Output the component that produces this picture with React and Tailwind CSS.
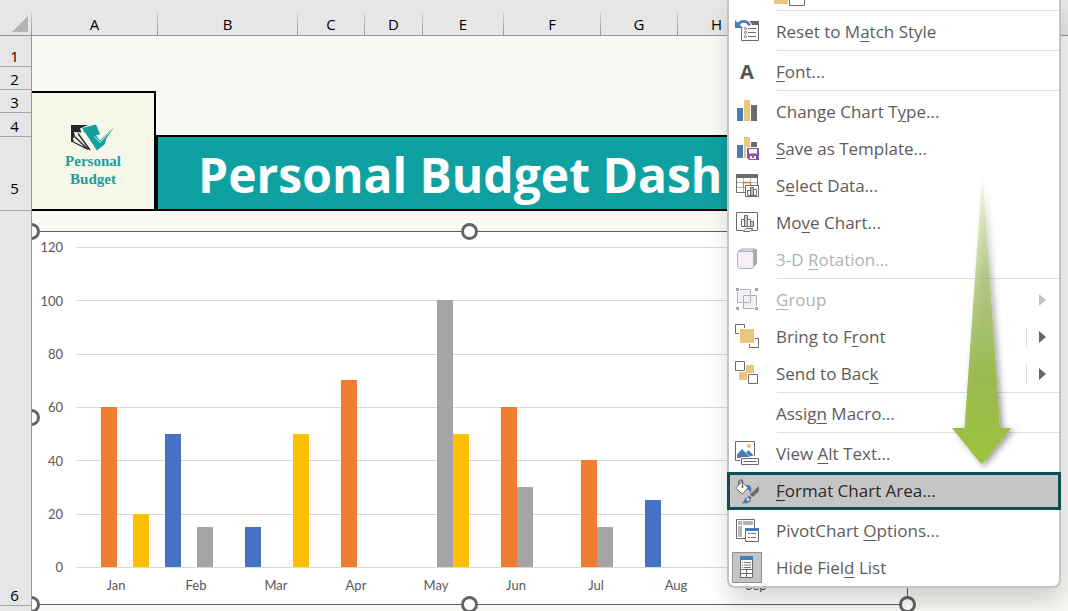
import React from "react";

const COLUMNS = [
  { name: "A", width: "w-[126px]" },
  { name: "B", width: "w-[140px]" },
  { name: "C", width: "w-[67px]" },
  { name: "D", width: "w-[58px]" },
  { name: "E", width: "w-[81px]" },
  { name: "F", width: "w-[97px]" },
  { name: "G", width: "w-[77px]" },
  { name: "H", width: "w-[78px]" },
];

const ROWS = [
  { name: "1", size: "h-[31px]" },
  { name: "2", size: "h-[23px]" },
  { name: "3", size: "h-[23px]" },
  { name: "4", size: "h-6" },
  { name: "5", size: "h-[74px] pb-3" },
  { name: "6", size: "h-[395px]" },
];

const SERIES = ["bg-[#4472c4]", "bg-[#ed7d31]", "bg-[#a5a5a5]", "bg-[#ffc000]"];

const MONTHS = [
  { name: "Jan", values: [0, 60, 0, 20] },
  { name: "Feb", values: [50, 0, 15, 0] },
  { name: "Mar", values: [15, 0, 0, 50] },
  { name: "Apr", values: [0, 70, 0, 0] },
  { name: "May", values: [0, 0, 100, 50] },
  { name: "Jun", values: [0, 60, 30, 0] },
  { name: "Jul", values: [0, 40, 15, 0] },
  { name: "Aug", values: [25, 0, 0, 0] },
  { name: "Sep", values: [0, 0, 0, 0] },
];

const TICKS = [120, 100, 80, 60, 40, 20, 0];

const G = "#6b6b6b";
const BLUE = "#4a7db3";
const SAND = "#ecc57c";

function Icon({ children }) {
  return (
    <svg width="26" height="25" viewBox="0 0 26 25" fill="none" aria-hidden="true" className="shrink-0">
      {children}
    </svg>
  );
}

const ICONS = {
  reset: (
    <Icon>
      <path d="M7.5 9v12.5h17V2.5H16" stroke={G} />
      <path d="M16 2h9v4h-7z" fill={G} />
      <g stroke={G} fill="#fff">
        <circle cx="11.5" cy="9.5" r="1.1" />
        <circle cx="11.5" cy="13.5" r="1.1" />
        <circle cx="11.5" cy="17.5" r="1.1" />
      </g>
      <path d="M14 9.5h8M14 13.5h8M14 17.5h8" stroke={G} />
      <path d="M4 6C6 1.500 13 .500 15.500 6.500" stroke={BLUE} strokeWidth="2.800" />
      <path d="M1 1v8h8z" fill={BLUE} />
    </Icon>
  ),
  bars: (
    <Icon>
      <path d="M3 9h6v13H3z" fill={BLUE} />
      <path d="M10 1h6v21h-6z" fill={SAND} />
      <path d="M17 6h6v16h-6z" fill={G} />
    </Icon>
  ),
  save: (
    <Icon>
      <path d="M3 9h6v13H3z" fill={BLUE} />
      <path d="M10 1h6v10h-4v11h-2z" fill={SAND} />
      <path d="M17 6h6v5h-6z" fill={G} />
      <path d="M13 12h12v12H15l-2-2z" fill="#8a56a8" />
      <path d="M15 13h8v4.500h-8zM16 20h6v3h-6z" fill="#fff" />
      <path d="M18 20h2v2h-2z" fill="#8a56a8" />
    </Icon>
  ),
  select: (
    <Icon>
      <path d="M11 19.500H2.500v-18h21V12" stroke={G} />
      <path d="M2 1h22v4H2z" fill={G} />
      <path d="M3 9.500h20M3 14.500h8M9.500 5v14M16.500 5v7" stroke="#b5b5b5" />
      <path d="M9.500 14.500v-5h7v3" stroke="#e07b27" strokeWidth="1.300" />
      <path d="M11.500 12.500h13v11h-13z" fill="#fff" stroke={G} />
      <path d="M13.500 22.500v-5h3v5zM19.500 22.500v-6h3v6z" fill="#fff" stroke={G} />
      <path d="M16.500 22.500v-8h3v8z" fill="#b5b5b5" stroke={G} />
    </Icon>
  ),
  move: (
    <Icon>
      <path d="M9 20.500H2.500v-18h21v18H17" stroke={G} />
      <path d="M7.500 16.500v-7h3v7zM13.500 16.500v-7h3v7z" fill="#fff" stroke={G} />
      <path d="M10.500 16.500v-11h3v11zM16.500 16.500v-5h3v5z" fill="#c9c9c9" stroke={G} />
      <path d="M12 18.500h7l-3 3H9.500c0-1.500 1.500-1 2.500-3z" fill="#fff" stroke={G} />
    </Icon>
  ),
  cube: (
    <Icon>
      <path d="M4 4l4-2.500h12q3 0 3 3v11q0 2-1.500 3L18 21z" fill="#a9a7aa" />
      <path d="M6 4l3-1.800h11L18 4z" fill="#dad7db" />
      <rect x="3.500" y="4.500" width="16" height="17" rx="2.500" fill="#f5f0f7" stroke="#b3b1b4" />
    </Icon>
  ),
  group: (
    <Icon>
      <path d="M3.500 2.500h13v13h-13zM9.500 8.500h13v13h-13z" fill="#f5f0f7" />
      <path d="M3.500 2.500h13v13h-13zM9.500 8.500h13v13h-13z" stroke="#b0b0b0" />
      <path d="M1 0h5v5H1zM20 0h5v5h-5zM1 19h5v5H1zM20 19h5v5h-5z" fill="#fff" />
      <path d="M2 1h3v3H2zM21 1h3v3h-3zM2 20h3v3H2zM21 20h3v3h-3z" fill="#a6a6a6" />
    </Icon>
  ),
  front: (
    <Icon>
      <path d="M1.500 .500h9v9h-9zM15.500 14.500h9v9h-9z" stroke={G} />
      <path d="M5 4h16v16H5z" fill="#fff" />
      <path d="M6 5h14v14H6z" fill={SAND} />
    </Icon>
  ),
  back: (
    <Icon>
      <path d="M12 4h8v8h-8zM5 11h8v8H5z" fill={SAND} />
      <path d="M1.500 .500h9v9h-9zM14.500 13.500h9v9h-9z" fill="#fff" stroke={G} />
    </Icon>
  ),
  alt: (
    <Icon>
      <path d="M6 19.500H1.500V.500h19V15" stroke={G} />
      <path d="M3 17v-3.500L8 8l8 8H7v1z" fill={BLUE} />
      <path d="M12 11.500l2-2 1.500.500L19 14v1h-3.500z" fill={BLUE} />
      <circle cx="15" cy="5" r="2" fill={SAND} />
      <path d="M7.500 17.500h17v6h-17z" fill="#fff" stroke={G} />
      <path d="M9.500 20.500h13" stroke={G} />
    </Icon>
  ),
  format: (
    <Icon>
      <path d="M11.500 6.500C16 4.500 19 8 16.500 14.500 15.500 11 14 9.500 11 10z" fill={BLUE} />
      <path d="M1.500 9L8 2.800l6 6-5.800 6.200z" fill="#fff" stroke={G} />
      <path d="M4.800 6V2.500Q6.500-.500 8.500 1.800V8" stroke={G} strokeWidth="1.300" />
      <circle cx="8.500" cy="8" r="1" fill={G} />
      <path d="M25 7v5l-6 6-3-2.500z" fill={G} />
      <path d="M15 16.500l2.800 2.300-1.500 1.500-2.800-2.300z" fill={G} />
      <path d="M7.500 24c3-.500 2-4.500 5.500-5.500 2-.500 4 1 3.500 3-.500 2.500-5 3.500-9 2.500z" fill={BLUE} />
      <circle cx="14" cy="20.500" r="1.200" fill="#fff" />
    </Icon>
  ),
  pivot: (
    <Icon>
      <path d="M11 20.500H2.500v-19h18V10" stroke={G} />
      <path d="M4 3h4v4H4zM9 3h10v4H9zM4 8h4v11H4z" fill="#b5b5b5" />
      <path d="M11.500 10.500h13v13h-13z" fill="#fff" stroke={G} />
      <path d="M11 10h14v3H11z" fill={BLUE} />
      <path d="M14 15.500h2M17 15.500h5M14 19.500h2M17 19.500h5" stroke={G} strokeWidth="1.200" />
    </Icon>
  ),
  list: (
    <Icon>
      <path d="M6.500 1.500h12v21h-12z" fill="#fff" stroke={G} />
      <path d="M6 1h13v4H6z" fill={BLUE} />
      <path d="M8 7.500h1M10 7.500h7M8 10h1M10 10h7M8 12.500h1M10 12.500h7" stroke={G} strokeWidth=".900" />
      <path d="M6 14.500h13M6 18.500h13M12.500 14.500v8" stroke={G} />
    </Icon>
  ),
};

const MENU = [
  { icon: "reset", text: ["Reset to M", "a", "tch Style"] },
  { sep: true },
  { letter: "A", text: ["", "F", "ont..."] },
  { sep: true },
  { icon: "bars", text: ["Change Chart T", "y", "pe..."] },
  { icon: "save", text: ["", "S", "ave as Template..."] },
  { icon: "select", text: ["S", "e", "lect Data..."] },
  { icon: "move", text: ["Mo", "v", "e Chart..."] },
  { icon: "cube", text: ["3-D ", "R", "otation..."], disabled: true },
  { sep: true },
  { icon: "group", text: ["", "G", "roup"], disabled: true, sub: true },
  { icon: "front", text: ["Bring to F", "r", "ont"], sub: true },
  { icon: "back", text: ["Send to Bac", "k", ""], sub: true },
  { sep: true },
  { text: ["Assig", "n", " Macro..."] },
  { sep: true },
  { icon: "alt", text: ["View ", "A", "lt Text..."] },
  { icon: "format", text: ["", "F", "ormat Chart Area..."], active: true },
  { sep: true, hidden: true },
  { icon: "pivot", text: ["PivotChart ", "O", "ptions..."] },
  { icon: "list", text: ["Hide Fiel", "d", " List"], checked: true },
];

function MenuItem({ item }) {
  const tone = item.disabled ? "text-[#b1b1b1]" : item.active ? "text-[#2b2b2b]" : "text-[#5c5c5c]";
  const box = item.active
    ? "-mx-0.5 -mb-px h-[38px] w-[calc(100%+4px)] border-[3px] border-[#0f4f54] bg-[#c5c5c5] pl-0.5 pr-3"
    : "h-[37px] w-full pl-[3px] pr-[13px]";
  return (
    <button type="button" disabled={item.disabled} className={`flex items-center gap-3.5 text-left ${box} ${tone}`}>
      <span
        className={`flex h-[31px] w-[30px] shrink-0 items-center justify-center ${
          item.checked ? "border border-[#919191] bg-[#c5c5c5]" : ""
        }`}
      >
        {item.letter ? <b className="text-xl text-[#555]">{item.letter}</b> : null}
        {item.icon ? ICONS[item.icon] : null}
      </span>
      <span className="grow whitespace-pre">
        {item.text[0]}
        <span className="underline decoration-1 underline-offset-3">{item.text[1]}</span>
        {item.text[2]}
      </span>
      {item.sub ? (
        <span className={`flex h-5 items-center pl-3 ${item.disabled ? "" : "border-l border-[#dcdcdc]"}`}>
          <svg width="7" height="12" viewBox="0 0 7 12" aria-hidden="true">
            <path d="M0 0l7 6-7 6z" fill={item.disabled ? "#c3c3c3" : "#666"} />
          </svg>
        </span>
      ) : null}
    </button>
  );
}

function ContextMenu() {
  return (
    <div className="absolute right-[7px] top-0 w-[334px] rounded-b-lg border-2 border-t-0 border-[#c4c4c4] bg-white font-['Open_Sans',sans-serif] text-[17px] leading-6 shadow-[2px_14px_24px_rgba(0,0,0,0.16)]">
      <div className="h-2.5 pl-[45px]">
        <svg width="32" height="6" viewBox="0 0 32 6" aria-hidden="true">
          <path d="M0 0h14v4H0z" fill={SAND} />
          <path d="M15.500-1v6.500h15V-1" fill="#fff" stroke={G} />
        </svg>
      </div>
      <div className="mb-0.5 ml-12 h-px bg-[#dedede]" />
      {MENU.map((item, i) =>
        item.sep ? (
          <div key={i} className={`mb-0.5 ml-12 h-px ${item.hidden ? "" : "bg-[#dedede]"}`} />
        ) : (
          <MenuItem key={i} item={item} />
        )
      )}
      <svg
        width="80"
        height="310"
        viewBox="0 0 80 310"
        aria-hidden="true"
        className="pointer-events-none absolute right-8 top-[165px]"
      >
        <defs>
          <linearGradient id="arrow-fill" x1="0" y1="0" x2="0" y2="1">
            <stop offset="0" stopColor="#a9cb55" stopOpacity="0" />
            <stop offset="0.120" stopColor="#a9c966" stopOpacity="0.300" />
            <stop offset="0.400" stopColor="#9fbe62" stopOpacity="0.700" />
            <stop offset="0.700" stopColor="#98b94d" stopOpacity="0.960" />
            <stop offset="1" stopColor="#9cc43a" />
          </linearGradient>
          <filter id="arrow-shadow" x="-30%" y="-5%" width="170%" height="115%">
            <feDropShadow dx="3" dy="2" stdDeviation="3" floodColor="#000" floodOpacity="0.400" />
          </filter>
        </defs>
        <path
          d="M35.500 6L53 263h11.500L34.500 299.500 5 263h12.500z"
          fill="url(#arrow-fill)"
          filter="url(#arrow-shadow)"
        />
      </svg>
    </div>
  );
}

function Logo() {
  return (
    <div className="flex h-[120px] w-[124px] shrink-0 flex-col items-center border-y-2 border-r-2 border-black bg-[#f6f6e9] pt-[31px]">
      <svg width="46" height="28" viewBox="0 0 46 28" aria-hidden="true">
        <path d="M1 1h17l-8 3.500 1.500 4L4 8l1 4-4 5z" fill="#262829" />
        <path d="M8 9.500L20 26M4.500 12.500L18 25.500M1.500 17L16 24.500" stroke="#262829" strokeWidth="1.400" />
        <path d="M1 12v6l3-1z" fill="#262829" />
        <path d="M12 4L26 .500 30 10l-4 1.500 4 5L45 2l-9 13-1 5-8 6.500z" fill="#11a1a1" />
        <path d="M13 7.500L22 6l5 5" stroke="#0d8f90" strokeWidth=".800" fill="none" />
        <path d="M24.500 12.500l5.500 6L45 2" stroke="#f6f6e9" strokeWidth=".900" fill="none" />
      </svg>
      <p className="text-center font-['Liberation_Serif',serif] text-[15px] font-bold leading-[18px] text-[#1a9f9f]">
        Personal
        <br />
        Budget
      </p>
    </div>
  );
}

const HANDLES = [
  "-left-[9px] -top-[9px]",
  "left-1/2 -ml-[9px] -top-[9px]",
  "-left-[9px] top-1/2 -mt-[9px]",
  "-left-[9px] -bottom-[9px]",
  "left-1/2 -ml-[9px] -bottom-[9px]",
  "-right-[9px] -bottom-[9px]",
];

function Chart() {
  return (
    <div className="relative -ml-px mt-5 flex h-[374px] w-[877px] border border-[#5f5f5f] bg-white pt-[15px] font-['Lato',sans-serif] text-[13px] text-[#595959]">
      <div className="mt-px flex h-80 w-[31px] flex-col justify-between">
        {TICKS.map((t) => (
          <span key={t} className="flex h-0 items-center justify-end">
            {t}
          </span>
        ))}
      </div>
      <div className="ml-[13px]">
        <div className="grid h-[321px] grid-cols-1 grid-rows-1">
          <div className="col-start-1 row-start-1 flex flex-col border-b border-[#d9d9d9]">
            {TICKS.slice(1).map((t) => (
              <div key={t} className="grow basis-0 border-t border-[#d9d9d9]" />
            ))}
          </div>
          <div className="col-start-1 row-start-1 flex pb-px pl-px">
            {MONTHS.map((m) => (
              <div key={m.name} className="flex h-80 w-20 items-end justify-center">
                {m.values.map((v, i) => (
                  <div key={i} className={`w-4 ${SERIES[i]}`} style={{ height: `${(v / 120) * 100}%` }} />
                ))}
              </div>
            ))}
          </div>
        </div>
        <div className="mt-[7px] flex leading-5">
          {MONTHS.map((m) => (
            <span key={m.name} className="w-20 text-center">
              {m.name}
            </span>
          ))}
        </div>
      </div>
      {HANDLES.map((h) => (
        <span key={h} className={`absolute size-[17px] rounded-full border-[3px] border-[#636363] bg-white ${h}`} />
      ))}
    </div>
  );
}

export default function App() {
  return (
    <main className="relative flex h-screen flex-col overflow-hidden bg-[#f9faf5] font-['Open_Sans',sans-serif] text-[15px] text-black">
      <div className="flex h-9 shrink-0 border-b border-[#949494] bg-[#e6e6e6]">
        <div className="flex w-8 items-end justify-end pb-[3px] pr-1">
          <svg width="16" height="16" viewBox="0 0 16 16" aria-hidden="true">
            <path d="M16 0v16H0z" fill="#b4b4b4" />
          </svg>
        </div>
        <span className="-ml-px mt-3 w-px bg-gradient-to-b from-[#d4d4d4] to-[#949494]" />
        {COLUMNS.map((c) => (
          <div key={c.name} className={`flex shrink-0 ${c.width}`}>
            <span className="grow pt-3.5 text-center leading-5">{c.name}</span>
            <span className="mt-3 w-px bg-gradient-to-b from-[#d4d4d4] to-[#949494]" />
          </div>
        ))}
      </div>
      <div className="flex min-h-0 grow">
        <div className="w-8 shrink-0 border-r border-[#949494] bg-[#e6e6e6]">
          {ROWS.map((r) => (
            <div key={r.name} className={`flex items-end justify-center border-b border-[#a8a8a8] pr-0.5 ${r.size}`}>
              <span className="leading-5">{r.name}</span>
            </div>
          ))}
        </div>
        <div className="min-w-0 grow overflow-hidden">
          <div className="flex items-end pr-16 pt-[55px]">
            <Logo />
            <h1 className="h-[76px] grow overflow-hidden whitespace-nowrap border-2 border-black bg-[#0fa1a1] pl-10 text-[48px] font-bold leading-[76px] text-white">
              Personal Budget Dash
            </h1>
          </div>
          <Chart />
        </div>
      </div>
      <ContextMenu />
    </main>
  );
}
